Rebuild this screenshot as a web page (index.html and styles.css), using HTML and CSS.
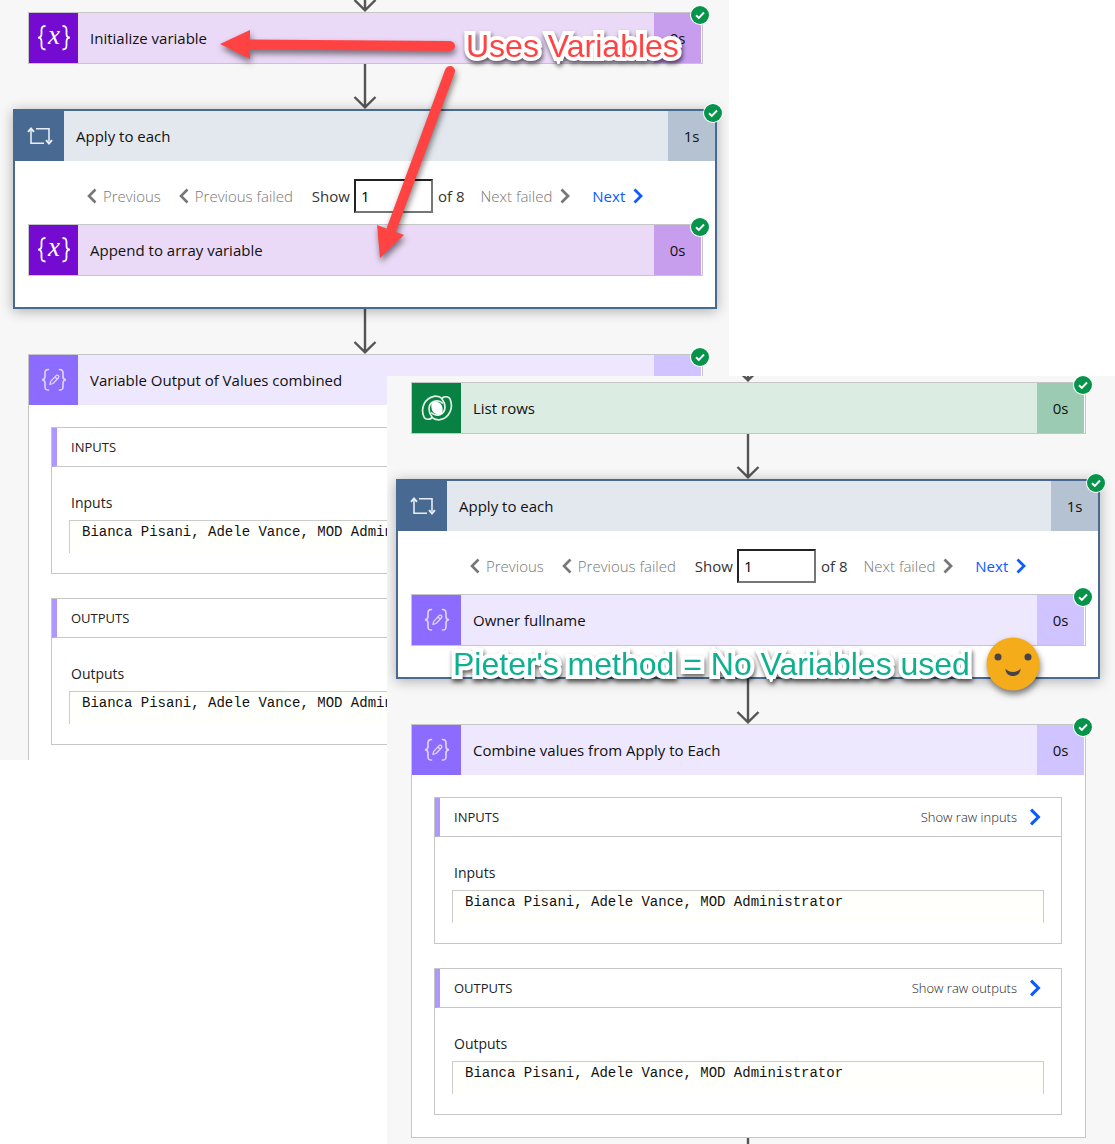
FILE: index.html
```html
<!DOCTYPE html>
<html lang="en">
<head>
    <meta charset="UTF-8">
    <meta name="viewport" content="width=device-width, initial-scale=1.0">
    <title>Flow run comparison</title>
    <link rel="stylesheet" href="styles.css">
</head>
<body>
    <!-- Shared icons -->
    <svg class="sprite" aria-hidden="true">
        <symbol id="icon-variable" viewBox="0 0 36 28">
            <path d="M9.500 2 C6 2 5.500 3.500 5.500 6 V10 C5.500 12.500 4.500 13.700 2 13.700 C4.500 13.700 5.500 15 5.500 17.500 V21.500 C5.500 24 6 25.500 9.500 25.500 M26.500 2 C30 2 30.500 3.500 30.500 6 V10 C30.500 12.500 31.500 13.700 34 13.700 C31.500 13.700 30.500 15 30.500 17.500 V21.500 C30.500 24 30 25.500 26.500 25.500" fill="none" stroke="#fff" stroke-width="1.800"/>
            <text x="18" y="20" text-anchor="middle" font-family="Liberation Serif, serif" font-style="italic" font-size="27" fill="#fff">x</text>
        </symbol>
        <symbol id="icon-compose" viewBox="0 0 26 24">
            <g fill="none" stroke="#e0d7ff" stroke-width="1.600" stroke-linecap="round">
                <path d="M7.500 1.500 C4.500 1.500 4 2.800 4 5 V8.500 C4 10.700 3 11.600 1 11.800 C3 12 4 13 4 15 V18.500 C4 21 4.500 22 7.500 22 M18.500 1.500 C21.500 1.500 22 2.800 22 5 V8.500 C22 10.700 23 11.600 25 11.800 C23 12 22 13 22 15 V18.500 C22 21 21.500 22 18.500 22"/>
                <path d="M9 16.500 L9.700 13.400 L15.300 7.400 Q16.500 6.700 17.500 7.700 Q18.300 8.700 17.500 9.700 L12 15.500 Z M14 9 L16 11" stroke-width="1.300" stroke-linejoin="round"/>
            </g>
        </symbol>
        <symbol id="icon-loop" viewBox="0 0 26 18">
            <g fill="none" stroke="#e7edf4" stroke-width="1.600">
                <path d="M4 3 V16.200 H17"/>
                <path d="M9 1.800 H22 V14.500"/>
                <path d="M1 4.800 L4 1.500 L7 4.800 M19 13.200 L22 16.500 L25 13.200" stroke-width="1.900"/>
            </g>
        </symbol>
        <symbol id="icon-dataverse" viewBox="0 0 32 26">
            <g fill="none" stroke="#e4f3ea" stroke-width="1.700" stroke-linejoin="round">
                <path id="lobe" d="M22 8.500 C17 3.500 8 6 8 14 C8 17 9 19.500 11 22 C10.500 24.500 4.500 25.500 3 22 C-1 13 4 3 13 1.300 C16.500 .900 19.500 2 21.500 3.800"/>
                <use href="#lobe" transform="rotate(180 16 13)"/>
            </g>
            <path d="M11 7.500 C14 5 21 7 21.500 13 C22 16 21 18.500 21 18.500 C18 21 11 19 10.500 13 C10 10 11 7.500 11 7.500 Z" fill="#fff"/>
        </symbol>
        <symbol id="icon-check" viewBox="0 0 20 20">
            <circle cx="10" cy="10" r="10" fill="#fff"/>
            <circle cx="10" cy="10" r="9" fill="#05944a"/>
            <path d="M6 10.300 L8.800 13 L14 7.500" fill="none" stroke="#fff" stroke-width="1.900"/>
        </symbol>
        <symbol id="icon-left" viewBox="0 0 10 16">
            <path d="M8.500 1.500 L2 8 L8.500 14.500" fill="none" stroke="currentColor" stroke-width="2.600"/>
        </symbol>
        <symbol id="icon-right" viewBox="0 0 10 16">
            <path d="M1.500 1.500 L8 8 L1.500 14.500" fill="none" stroke="currentColor" stroke-width="2.800"/>
        </symbol>
        <symbol id="icon-arrow" viewBox="0 0 24 45">
            <path d="M12 0 V43 M1.500 33 L12 43.300 L22.500 33" fill="none" stroke="#555" stroke-width="2.400"/>
        </symbol>
    </svg>

    <main class="compare">
        <!-- Flow with variables -->
        <section class="flow flow-variables">
            <div class="connector stub-top"><svg><use href="#icon-arrow"/></svg></div>
            <article class="card variable">
                <header class="card-head">
                    <span class="card-icon"><svg width="36" height="28"><use href="#icon-variable"/></svg></span>
                    <h2>Initialize variable</h2>
                    <span class="duration">0s</span>
                </header>
                <svg class="badge"><use href="#icon-check"/></svg>
            </article>
            <div class="connector"><svg><use href="#icon-arrow"/></svg></div>

            <article class="scope">
                <header class="card-head">
                    <span class="card-icon"><svg width="26" height="18"><use href="#icon-loop"/></svg></span>
                    <h2>Apply to each</h2>
                    <span class="duration">1s</span>
                </header>
                <div class="pager">
                    <button type="button" disabled><svg><use href="#icon-left"/></svg>Previous</button>
                    <button type="button" disabled><svg><use href="#icon-left"/></svg>Previous failed</button>
                    <label for="page-a">Show</label>
                    <input id="page-a" type="text" value="1">
                    <span class="total">of 8</span>
                    <button type="button" disabled>Next failed<svg><use href="#icon-right"/></svg></button>
                    <button type="button" class="next">Next<svg><use href="#icon-right"/></svg></button>
                </div>
                <article class="card variable">
                    <header class="card-head">
                        <span class="card-icon"><svg width="36" height="28"><use href="#icon-variable"/></svg></span>
                        <h2>Append to array variable</h2>
                        <span class="duration">0s</span>
                    </header>
                    <svg class="badge"><use href="#icon-check"/></svg>
                </article>
                <svg class="badge"><use href="#icon-check"/></svg>
            </article>
            <div class="connector"><svg><use href="#icon-arrow"/></svg></div>

            <article class="card compose open-ended">
                <header class="card-head">
                    <span class="card-icon"><svg width="26" height="24"><use href="#icon-compose"/></svg></span>
                    <h2>Variable Output of Values combined</h2>
                    <span class="duration">0s</span>
                </header>
                <div class="card-body">
                    <section class="io">
                        <div class="io-head"><h3>INPUTS</h3></div>
                        <h4>Inputs</h4>
                        <pre>Bianca Pisani, Adele Vance, MOD Administrator</pre>
                    </section>
                    <section class="io">
                        <div class="io-head"><h3>OUTPUTS</h3></div>
                        <h4>Outputs</h4>
                        <pre>Bianca Pisani, Adele Vance, MOD Administrator</pre>
                    </section>
                </div>
                <svg class="badge"><use href="#icon-check"/></svg>
            </article>

            <!-- Annotations -->
            <svg class="pointers" viewBox="0 0 270 260" aria-hidden="true">
                <g fill="#ff4343" stroke="#ff4343">
                    <path d="M39 24.500 L240 26" fill="none" stroke-width="10" stroke-linecap="round"/>
                    <path d="M10 24 L40 10 V39 Z" stroke="none"/>
                    <path d="M240 51 L182 208" fill="none" stroke-width="10" stroke-linecap="round"/>
                    <path d="M170 238 L167 205 L194 215 Z" stroke="none"/>
                </g>
            </svg>
            <p class="note note-variables">Uses Variables</p>
        </section>

        <!-- Flow without variables -->
        <section class="flow flow-compose">
            <div class="connector stub-top"><svg><use href="#icon-arrow"/></svg></div>
            <article class="card dataverse">
                <header class="card-head">
                    <span class="card-icon"><svg width="32" height="26"><use href="#icon-dataverse"/></svg></span>
                    <h2>List rows</h2>
                    <span class="duration">0s</span>
                </header>
                <svg class="badge"><use href="#icon-check"/></svg>
            </article>
            <div class="connector"><svg><use href="#icon-arrow"/></svg></div>

            <article class="scope">
                <header class="card-head">
                    <span class="card-icon"><svg width="26" height="18"><use href="#icon-loop"/></svg></span>
                    <h2>Apply to each</h2>
                    <span class="duration">1s</span>
                </header>
                <div class="pager">
                    <button type="button" disabled><svg><use href="#icon-left"/></svg>Previous</button>
                    <button type="button" disabled><svg><use href="#icon-left"/></svg>Previous failed</button>
                    <label for="page-b">Show</label>
                    <input id="page-b" type="text" value="1">
                    <span class="total">of 8</span>
                    <button type="button" disabled>Next failed<svg><use href="#icon-right"/></svg></button>
                    <button type="button" class="next">Next<svg><use href="#icon-right"/></svg></button>
                </div>
                <article class="card compose">
                    <header class="card-head">
                        <span class="card-icon"><svg width="26" height="24"><use href="#icon-compose"/></svg></span>
                        <h2>Owner fullname</h2>
                        <span class="duration">0s</span>
                    </header>
                    <svg class="badge"><use href="#icon-check"/></svg>
                </article>
                <svg class="badge"><use href="#icon-check"/></svg>
            </article>
            <div class="connector"><svg><use href="#icon-arrow"/></svg></div>

            <article class="card compose">
                <header class="card-head">
                    <span class="card-icon"><svg width="26" height="24"><use href="#icon-compose"/></svg></span>
                    <h2>Combine values from Apply to Each</h2>
                    <span class="duration">0s</span>
                </header>
                <div class="card-body">
                    <section class="io">
                        <div class="io-head">
                            <h3>INPUTS</h3>
                            <button type="button">Show raw inputs<svg><use href="#icon-right"/></svg></button>
                        </div>
                        <h4>Inputs</h4>
                        <pre>Bianca Pisani, Adele Vance, MOD Administrator</pre>
                    </section>
                    <section class="io">
                        <div class="io-head">
                            <h3>OUTPUTS</h3>
                            <button type="button">Show raw outputs<svg><use href="#icon-right"/></svg></button>
                        </div>
                        <h4>Outputs</h4>
                        <pre>Bianca Pisani, Adele Vance, MOD Administrator</pre>
                    </section>
                </div>
                <svg class="badge"><use href="#icon-check"/></svg>
            </article>
            <div class="connector stub-bottom"><svg><use href="#icon-arrow"/></svg></div>

            <!-- Annotations -->
            <p class="note note-compose">Pieter's method = No Variables used</p>
            <svg class="smiley" viewBox="0 0 54 54" aria-hidden="true">
                <circle cx="27" cy="27" r="26.500" fill="#f5ac1b"/>
                <circle cx="12" cy="20" r="3.500" fill="#464349"/>
                <circle cx="42" cy="20" r="3.500" fill="#464349"/>
                <path d="M19.500 31.500 C22 36 32 36 34.500 31.500 C35 41.500 19 41.500 19.500 31.500 Z" fill="#464349"/>
            </svg>
        </section>
    </main>
</body>
</html>
```

FILE: styles.css
```css
* {
    box-sizing: border-box;
}
body {
    font-family: "Open Sans", "Noto Sans", sans-serif;
    font-size: 15px;
    margin: 0;
    background-color: #fff;
    color: #111;
}
h2, h3, h4, p, pre {
    margin: 0;
}
svg {
    display: block;
    flex: none;
}
button {
    display: flex;
    align-items: center;
    padding: 0;
    border: 0;
    background: none;
    font: inherit;
    color: #222;
    white-space: nowrap;
}
.sprite {
    position: absolute;
    width: 0;
    height: 0;
}

/* the two flows overlap in the middle column */
.compare {
    display: grid;
    grid-template-columns: minmax(0, 387fr) minmax(0, 342fr) minmax(0, 386fr);
    align-items: start;
}
.flow {
    position: relative;
    grid-row: 1;
    overflow: hidden;
    background-color: #f7f7f7;
}
.flow-variables {
    grid-column: 1 / 3;
    padding: 0 12px 0 13px;
}
.flow-compose {
    grid-column: 2 / 4;
    margin-top: 376px;
    padding: 0 15px 0 9px;
}

/* connectors */
.connector {
    display: flex;
    justify-content: center;
    height: 45px;
}
.connector svg {
    width: 24px;
    height: 45px;
}
.stub-top {
    align-items: flex-end;
    height: 12px;
}
.flow-compose .stub-top {
    height: 6px;
}
.stub-bottom {
    height: 6px;
    overflow: hidden;
}

/* cards */
.card {
    position: relative;
    margin: 0 14px 0 15px;
    border: 1px solid #c6c6c6;
    background-color: #fff;
}
.card > .card-head {
    padding-right: 1px;
}
.card-head {
    display: flex;
    height: 50px;
}
.card-head h2 {
    flex: 1;
    padding-left: 12px;
    font-size: 15px;
    font-weight: 400;
    line-height: 50px;
    white-space: nowrap;
    background-color: var(--tint);
}
.card-icon {
    display: flex;
    align-items: center;
    justify-content: center;
    width: 49px;
    background-color: var(--brand);
}
.duration {
    width: 47px;
    line-height: 50px;
    text-align: center;
    background-color: var(--time);
}
.badge {
    position: absolute;
    top: -8px;
    right: -8px;
    width: 20px;
    height: 20px;
}
.variable {
    --brand: #750bd0;
    --tint: #ebdaf7;
    --time: #c79dee;
}
.compose {
    --brand: #8c6cff;
    --tint: #eee8ff;
    --time: #cfc4ff;
}
.dataverse {
    --brand: #088142;
    --tint: #dbece3;
    --time: #9bccb3;
}
.scope {
    --brand: #486991;
    --tint: #e3e8ef;
    --time: #b5c2d2;
    position: relative;
    padding-bottom: 31px;
    border: 2px solid #486991;
    background-color: #fff;
    box-shadow: 0 2px 12px rgba(0, 0, 0, 0.3);
}
.scope .card {
    margin: 0 12px 0 13px;
}

/* pager */
.pager {
    display: flex;
    align-items: center;
    height: 63px;
    padding: 6px 0 0 70px;
    font-weight: 300;
}
.pager button {
    gap: 6px;
    margin-right: 16px;
    color: #777;
}
.pager button svg {
    width: 10px;
    height: 16px;
}
.pager button svg:last-child {
    margin-left: 2px;
}
.pager input {
    width: 79px;
    height: 34px;
    margin: 0 5px 0 4px;
    padding: 0 5px;
    border: 2px solid #767676;
    border-top-color: #222;
    border-left-color: #222;
    font: inherit;
    font-weight: 400;
}
.pager label, .pager .total {
    font-weight: 400;
    color: #333;
}
.pager label {
    margin-left: 3px;
}
.pager .total {
    margin-right: 16px;
}
.pager .next {
    margin-left: 6px;
    font-weight: 400;
    color: #0b5cff;
}

/* inputs and outputs */
.card-body {
    padding: 22px 23px 22px 22px;
}
.open-ended {
    border-bottom: 0;
}
.open-ended .card-body {
    padding-bottom: 15px;
}
.io {
    height: 147px;
    border: 1px solid #c6c6c6;
}
.io + .io {
    margin-top: 24px;
}
.io-head {
    display: flex;
    align-items: center;
    justify-content: space-between;
    height: 39px;
    padding: 0 20px 0 14px;
    border-bottom: 1px solid #c6c6c6;
    border-left: 5px solid #ae97ff;
}
.io h3 {
    font-size: 13px;
    font-weight: 500;
    color: #222;
}
.io-head button {
    gap: 12px;
    font-size: 13px;
    font-weight: 300;
}
.io-head button svg {
    width: 12px;
    height: 18px;
    color: #0b5cff;
}
.io h4 {
    height: 53px;
    padding: 18px 19px 0;
    font-size: 14px;
    font-weight: 500;
    line-height: 36px;
    color: #222;
}
.io pre {
    height: 33px;
    margin: 0 17px;
    padding: 0 12px;
    overflow: hidden;
    border: 1px solid #ccc;
    border-bottom: 0;
    background-color: #fffffc;
    font-family: "Liberation Mono", monospace;
    font-size: 14px;
    line-height: 22px;
}

/* annotations */
.pointers {
    position: absolute;
    top: 20px;
    left: 210px;
    width: 270px;
    height: 260px;
    filter: drop-shadow(1px 4px 3px rgba(0, 0, 0, 0.5));
}
.note {
    position: absolute;
    font-family: "Liberation Sans", Arial, sans-serif;
    font-size: 32px;
    line-height: 36px;
    white-space: nowrap;
    paint-order: stroke fill;
    -webkit-text-stroke: 8px #fff;
    filter: drop-shadow(1px 3px 2px rgba(0, 0, 0, 0.6));
}
.note-variables {
    top: 28px;
    left: 466px;
    color: #ff4343;
}
.note-compose {
    top: 270px;
    left: 66px;
    color: #0fb08f;
}
.smiley {
    position: absolute;
    top: 261px;
    left: 599px;
    width: 54px;
    height: 54px;
    filter: drop-shadow(1px 4px 3px rgba(0, 0, 0, 0.5));
}
```
